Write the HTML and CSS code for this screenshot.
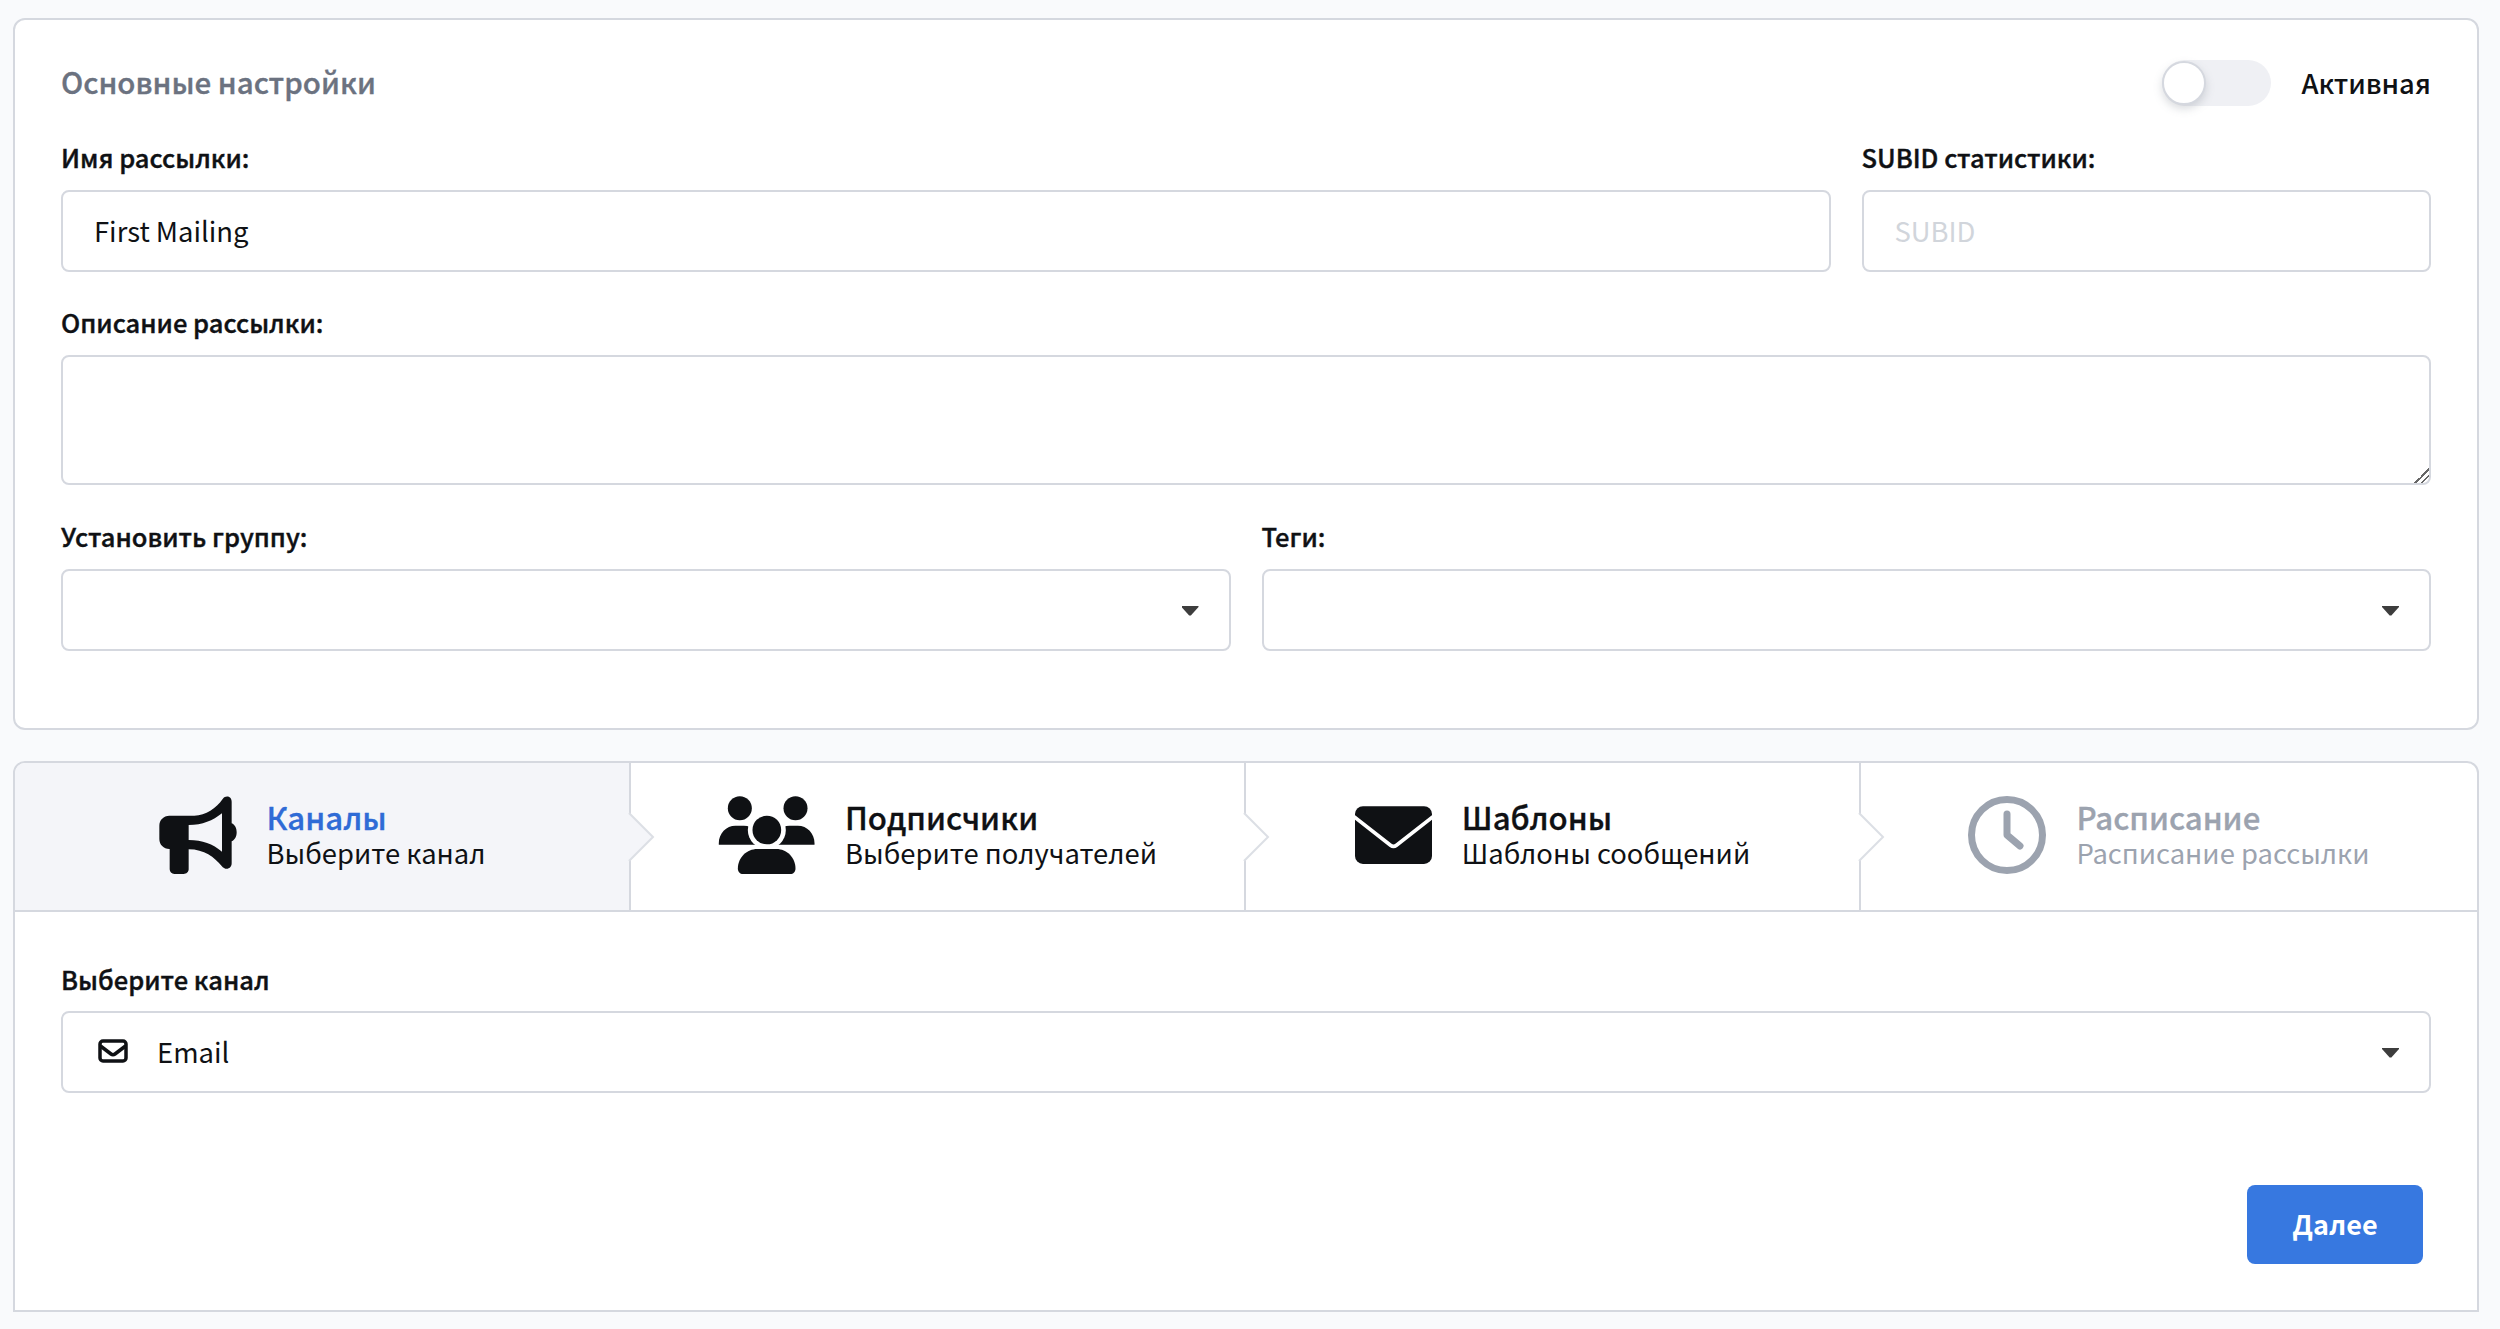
FILE: index.html
```html
<!DOCTYPE html>
<html lang="ru">
<head>
<meta charset="utf-8">
<title>First Mailing</title>
<link rel="stylesheet" href="styles.css">
</head>
<body>
<section class="card settings">
  <div class="settings-head">
    <h2 class="settings-title">Основные настройки</h2>
    <div class="switch-wrap">
      <span class="switch"><span class="knob"></span></span>
      <span class="switch-label">Активная</span>
    </div>
  </div>
  <div class="row row-name">
    <div class="field">
      <label class="label">Имя рассылки:</label>
      <input class="control" type="text" value="First Mailing">
    </div>
    <div class="field">
      <label class="label">SUBID статистики:</label>
      <input class="control" type="text" placeholder="SUBID">
    </div>
  </div>
  <div class="field">
    <label class="label">Описание рассылки:</label>
    <textarea class="control area"></textarea>
  </div>
  <div class="row row-half">
    <div class="field">
      <label class="label">Установить группу:</label>
      <div class="control select"><span class="caret"></span></div>
    </div>
    <div class="field">
      <label class="label">Теги:</label>
      <div class="control select"><span class="caret"></span></div>
    </div>
  </div>
</section>

<section class="card wizard">
  <div class="tabs">
    <div class="tab active">
      <svg class="ico ico-horn" viewBox="115 48 232 234"><path fill-rule="evenodd" d="M145 107H220C255 107 285 85 305 57C315 44 332 50 332 65V130C342 134 347 145 347 157C347 169 342 180 332 184V250C332 268 312 272 302 258C280 232 250 208 203 208V268C203 276 196 282 188 282H160C152 282 146 276 146 268V207H145C128 207 115 194 115 177V137C115 120 128 107 145 107ZM203 135V180C245 180 275 192 303 215V100C275 122 245 135 203 135Z"/></svg>
      <div class="tab-text"><div class="tab-title">Каналы</div><div class="tab-sub">Выберите канал</div></div>
      <svg class="chev" viewBox="0 0 26 50"><path d="M0 1L24 25L0 49"/></svg>
    </div>
    <div class="tab">
      <svg class="ico ico-people" viewBox="53 48 290 234">
        <circle cx="118" cy="85" r="36"/><circle cx="285" cy="85" r="36"/>
        <path d="M55 194C53 162 76 137 105 137H130C160 137 170 160 170 194ZM342 194C344 162 321 137 292 137H267C237 137 227 160 227 194Z"/>
        <circle class="gap" cx="199" cy="150" r="57"/>
        <circle cx="199" cy="150" r="43"/>
        <path d="M112 266C112 232 140 207 170 207H228C258 207 285 232 285 266C285 275 278 282 270 282H127C119 282 112 275 112 266Z"/>
      </svg>
      <div class="tab-text"><div class="tab-title">Подписчики</div><div class="tab-sub">Выберите получателей</div></div>
      <svg class="chev" viewBox="0 0 26 50"><path d="M0 1L24 25L0 49"/></svg>
    </div>
    <div class="tab">
      <svg class="ico ico-mail" viewBox="43 78 232 174">
        <rect x="43" y="78" width="232" height="174" rx="24"/>
        <path class="flap" d="M40 110L150 196Q159 203 168 196L278 110"/>
      </svg>
      <div class="tab-text"><div class="tab-title">Шаблоны</div><div class="tab-sub">Шаблоны сообщений</div></div>
      <svg class="chev" viewBox="0 0 26 50"><path d="M0 1L24 25L0 49"/></svg>
    </div>
    <div class="tab muted">
      <svg class="ico ico-clock" viewBox="0 0 78 78">
        <circle cx="39" cy="39" r="35.5"/>
        <path d="M39 18V39L52 50"/>
      </svg>
      <div class="tab-text"><div class="tab-title">Расписание</div><div class="tab-sub">Расписание рассылки</div></div>
    </div>
  </div>
  <div class="wizard-body">
    <label class="label">Выберите канал</label>
    <div class="control select channel">
      <svg class="ico-small" viewBox="0 0 30 24"><rect x="2" y="2" width="26" height="20" rx="3"/><path d="M2.500 7L13 15Q15 16.500 17 15L27.500 7"/></svg>
      <span class="channel-name">Email</span>
      <span class="caret"></span>
    </div>
    <div class="actions"><button class="next" type="button">Далее</button></div>
  </div>
</section>
</body>
</html>
```

FILE: styles.css
```css
* { box-sizing: border-box; }
html, body { height: 100%; }
body {
  margin: 0;
  padding: 18px 21px 0 13px;
  background: #f9fafc;
  color: #0f1114;
  font-family: "Noto Sans CJK SC", "Noto Sans", sans-serif;
  font-size: 27.4px;
  line-height: 32px;
  overflow: hidden;
}
.card {
  background: #fff;
  border: 2px solid #d5d8df;
  border-radius: 12px;
}
.settings { height: 712px; padding: 40px 46px 0; }
.settings-head {
  display: flex;
  align-items: center;
  justify-content: space-between;
  height: 46px;
  margin-bottom: 36px;
}
.settings-title {
  margin: 0 0 4px;
  font-size: 29.5px;
  font-weight: 500;
  color: #6b7280;
  -webkit-text-stroke: .35px currentColor;
}
.switch-wrap { display: flex; align-items: center; gap: 30px; }
.switch {
  position: relative;
  display: block;
  width: 109px;
  height: 46px;
  border-radius: 23px;
  background: #eff0f4;
}
.knob {
  position: absolute;
  left: 0;
  top: 1px;
  width: 44px;
  height: 44px;
  border-radius: 50%;
  background: #fff;
  border: 2px solid #d5d8df;
  box-shadow: 0 4px 8px rgba(107, 114, 128, .25);
}
.switch-label { margin-bottom: 3px; font-weight: 500; }
.row { display: grid; gap: 31px; }
.row-name { grid-template-columns: 1769.5px 569.5px; margin-bottom: 35px; }
.row-half { grid-template-columns: 1fr 1fr; margin-top: 36px; }
.field { display: flex; flex-direction: column; }
.label {
  display: block;
  height: 32px;
  margin-bottom: 16px;
  font-size: 25.5px;
  line-height: 30px;
  font-weight: 500;
  -webkit-text-stroke: .4px currentColor;
}
.control {
  display: block;
  width: 100%;
  height: 82px;
  padding: 0 31px 2px;
  border: 2px solid #d5d8df;
  border-radius: 8px;
  background: #fff;
  color: #0f1114;
  font: inherit;
  outline: none;
}
.control::placeholder { color: #d1d5db; opacity: 1; }
.area { height: 130px; }
.area::-webkit-resizer {
  background: linear-gradient(135deg, transparent 0 50%, #666 50% 57%, transparent 57% 72%, #666 72% 79%, transparent 79%);
}
.select { display: flex; align-items: center; justify-content: flex-end; padding-right: 30px; }
.caret {
  width: 17px;
  height: 10px;
  margin-top: 3px;
  background: #3d3d3d;
  clip-path: polygon(0 0, 100% 0, 100% 15%, 55% 100%, 45% 100%, 0 15%);
}
.wizard {
  margin-top: 31px;
  height: 551px;
  border-radius: 12px 12px 0 0;
}
.tabs { display: flex; height: 149px; border-bottom: 2px solid #d5d8df; }
.tab {
  position: relative;
  flex: 0 0 615px;
  display: flex;
  align-items: center;
  justify-content: center;
  gap: 30px;
  padding-bottom: 3px;
  border-right: 2px solid #d5d8df;
}
.tab:first-child { flex-basis: 616px; }
.tab:last-child { flex: 1 1 0; border-right: 0; }
.tab.active { background: #f4f5f9; border-top-left-radius: 10px; }
.chev {
  position: absolute;
  z-index: 1;
  right: -26px;
  top: 49px;
  width: 26px;
  height: 50px;
  overflow: visible;
  fill: #fff;
  stroke: #dcdfe5;
  stroke-width: 2;
}
.active .chev { fill: #f4f5f9; }
.ico { flex: none; fill: #0f1114; }
.ico-horn { width: 78px; height: 78px; }
.ico-people { width: 97px; height: 78px; }
.ico-mail { width: 77px; height: 58px; }
.ico-clock { width: 78px; height: 78px; fill: none; stroke: #9ca3af; stroke-width: 7; stroke-linecap: round; stroke-linejoin: round; }
.gap { fill: #fff; }
.flap { fill: none; stroke: #fff; stroke-width: 11; }
.tab-text { white-space: nowrap; padding-bottom: 3px; }
.tab-title { height: 34px; font-size: 31.2px; line-height: 36px; font-weight: 500; -webkit-text-stroke: .3px currentColor; }
.tab-sub { margin-top: 2px; line-height: 34px; }
.active .tab-title { color: #2f6bd6; }
.muted .tab-title, .muted .tab-sub { color: #9ca3af; }
.wizard-body { padding: 52px 46px 0; }
.wizard-body .label { margin-bottom: 15px; }
.channel { justify-content: flex-start; padding-left: 35px; }
.ico-small { flex: none; width: 30px; height: 24px; fill: none; stroke: #0f1114; stroke-width: 3.5; }
.channel-name { margin-left: 29px; }
.channel .caret { margin-left: auto; }
.actions { display: flex; justify-content: flex-end; padding: 92px 8px 0 0; }
.next {
  width: 176px;
  height: 79px;
  padding: 0 0 2px;
  border: 0;
  border-radius: 8px;
  background: #3778e0;
  color: #fff;
  font: inherit;
  font-size: 27px;
  font-weight: 700;
}
```
